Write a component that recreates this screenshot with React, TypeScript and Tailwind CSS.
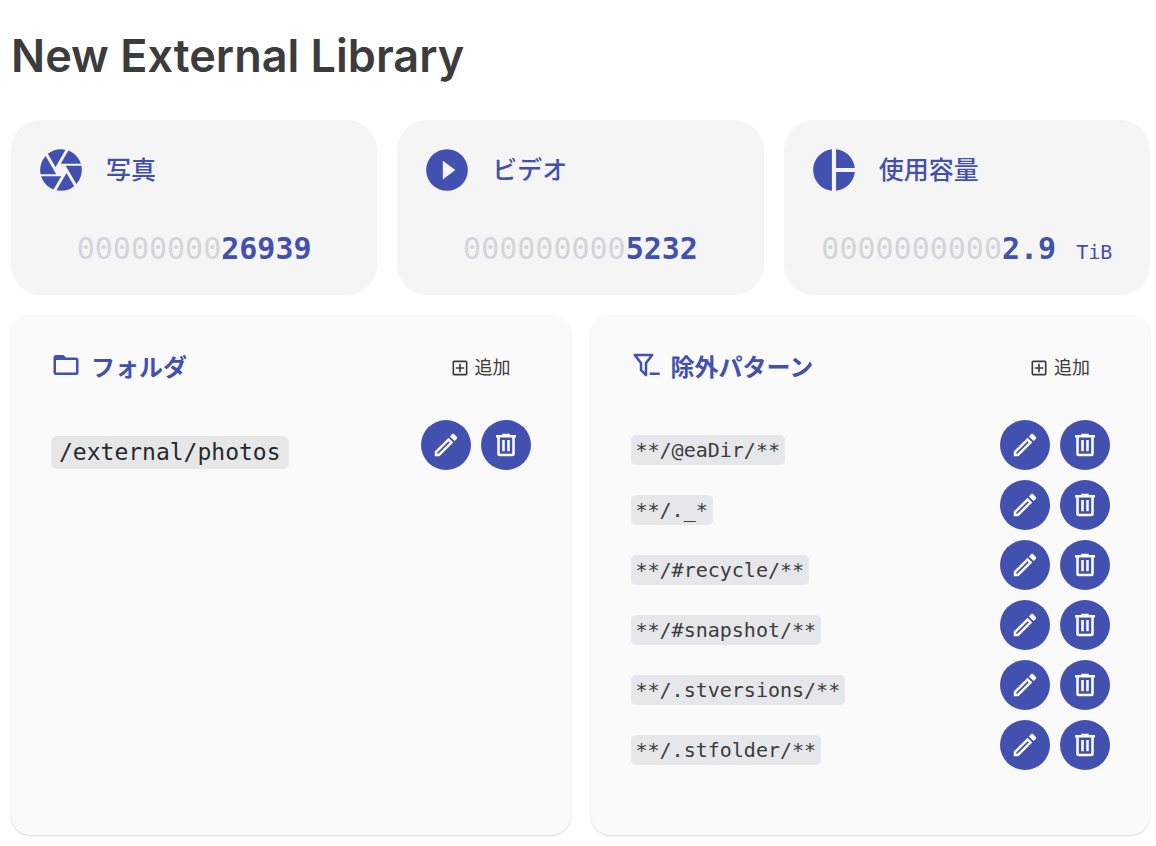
import type { ReactNode } from "react";

// Material Design icon paths, 24x24 view box
const icons = {
  iris: "M13.73,15L9.83,21.76C10.53,21.91 11.25,22 12,22C14.4,22 16.6,21.15 18.32,19.75L14.66,13.4M2.46,15C3.38,17.92 5.61,20.26 8.45,21.34L12.12,15M8.54,12L4.64,5.25C3,7 2,9.39 2,12C2,12.68 2.07,13.35 2.2,14H9.69M21.8,10H14.31L14.6,10.5L19.36,18.75C21,16.97 22,14.6 22,12C22,11.31 21.93,10.64 21.8,10M21.54,9C20.62,6.07 18.39,3.74 15.55,2.66L11.88,9M9.4,10.5L14.17,2.24C13.47,2.09 12.75,2 12,2C9.6,2 7.4,2.84 5.68,4.25L9.34,10.6L9.4,10.5Z",
  play: "M10,16.5V7.5L16,12M12,2A10,10 0 0,0 2,12A10,10 0 0,0 12,22A10,10 0 0,0 22,12A10,10 0 0,0 12,2Z",
  pie: "M11,2V22C5.9,21.5 2,17.2 2,12C2,6.8 5.9,2.5 11,2M13,2V11H22C21.5,6.2 17.8,2.5 13,2M13,13V22C17.7,21.5 21.5,17.8 22,13H13Z",
  folder: "M20,18H4V8H20M20,6H12L10,4H4C2.89,4 2,4.89 2,6V18A2,2 0 0,0 4,20H20A2,2 0 0,0 22,18V8C22,6.89 21.1,6 20,6Z",
  filterMinus:
    "M23,18V20H15V18H23M13,19.88C13.04,20.18 12.94,20.5 12.71,20.71C12.32,21.1 11.69,21.1 11.29,20.71L7.29,16.7C7.06,16.47 6.96,16.16 7,15.87V10.75L2.21,4.62C1.87,4.19 1.95,3.56 2.38,3.22C2.57,3.08 2.78,3 3,3H17C17.22,3 17.43,3.08 17.62,3.22C18.05,3.56 18.13,4.19 17.79,4.62L13,10.75V19.88M5.04,5L9,10.06V15.58L11,17.58V10.05L14.96,5H5.04Z",
  plusBox:
    "M19,19V5H5V19H19M19,3A2,2 0 0,1 21,5V19A2,2 0 0,1 19,21H5A2,2 0 0,1 3,19V5C3,3.89 3.9,3 5,3H19M11,7H13V11H17V13H13V17H11V13H7V11H11V7Z",
  pencil:
    "M14.06,9L15,9.94L5.92,19H5V18.08L14.06,9M17.66,3C17.41,3 17.15,3.1 16.96,3.29L15.13,5.12L18.88,8.87L20.71,7.04C21.1,6.65 21.1,6 20.71,5.63L18.37,3.29C18.17,3.09 17.92,3 17.66,3M14.06,6.19L3,17.25V21H6.75L17.81,9.94L14.06,6.19Z",
  trash:
    "M9,3V4H4V6H5V19A2,2 0 0,0 7,21H17A2,2 0 0,0 19,19V6H20V4H15V3H9M7,6H17V19H7V6M9,8V17H11V8H9M13,8V17H15V8H13Z",
};

type IconName = keyof typeof icons;

const FOLDERS = ["/external/photos"];

const PATTERNS = [
  "**/@eaDir/**",
  "**/._*",
  "**/#recycle/**",
  "**/#snapshot/**",
  "**/.stversions/**",
  "**/.stfolder/**",
];

const STAT_DIGITS = 13;

export default function App() {
  return (
    <main
      lang="ja"
      className="min-h-screen bg-white pt-[26px] pr-[6px] pb-[11px] pl-[11px] font-['Inter','Noto_Sans_CJK_JP',sans-serif] text-[#3c3c3c]"
    >
      <h1 className="mb-[34px] text-[45px] leading-[60px] font-semibold">
        New External Library
      </h1>

      <section className="mb-5 grid grid-cols-3 gap-5">
        <StatCard icon="iris" title="写真" value="26939" />
        <StatCard icon="play" title="ビデオ" value="5232" />
        <StatCard icon="pie" title="使用容量" value="2.9" unit="TiB" />
      </section>

      <section className="grid grid-cols-2 gap-5">
        <Panel icon="folder" title="フォルダ">
          {FOLDERS.map((path) => (
            <Row key={path} name={path}>
              <code className="mt-4 rounded-md bg-[#e7e7e7] px-2 font-['DejaVu_Sans_Mono',monospace] text-[23px] leading-[33px] text-[#1f2a30]">
                {path}
              </code>
            </Row>
          ))}
        </Panel>
        <Panel icon="filterMinus" title="除外パターン">
          {PATTERNS.map((pattern) => (
            <Row key={pattern} name={pattern}>
              <code className="mt-[15px] rounded-[5px] bg-[#e5e7eb] px-[5px] font-['DejaVu_Sans_Mono',monospace] text-[20px] leading-[30px]">
                {pattern}
              </code>
            </Row>
          ))}
        </Panel>
      </section>
    </main>
  );
}

function StatCard({
  icon,
  title,
  value,
  unit,
}: {
  icon: IconName;
  title: string;
  value: string;
  unit?: string;
}) {
  const zeros = "0".repeat(Math.max(0, STAT_DIGITS - value.length));

  return (
    <div className="rounded-[30px] bg-[#f5f5f5] p-[25px] text-[#4250af]">
      <div className="flex items-center gap-5">
        <Icon name={icon} className="size-[50px]" />
        <h2 className="text-[25px] leading-9 font-medium">{title}</h2>
      </div>
      <p className="mt-8 flex items-baseline justify-center font-['DejaVu_Sans_Mono',monospace] text-[30px] leading-[43px]">
        <span className="text-[#d1d5db]">{zeros}</span>
        <span className="font-semibold">{value}</span>
        {unit && <span className="ml-5 text-[20px] leading-none">{unit}</span>}
      </p>
    </div>
  );
}

function Panel({
  icon,
  title,
  children,
}: {
  icon: IconName;
  title: string;
  children: ReactNode;
}) {
  return (
    <div className="min-h-[520px] rounded-[20px] bg-[#fafafa] px-10 pt-[35px] pb-10 shadow-[0_1px_2px_rgba(0,0,0,0.16)]">
      <div className="mb-[34px] flex items-start justify-between">
        <div className="flex items-start gap-[10px] text-[#4250af]">
          <Icon name={icon} className="size-[30px]" />
          <h2 className="text-[24px] leading-9 font-bold">{title}</h2>
        </div>
        <button
          type="button"
          className="flex h-[35px] items-center gap-[5px] rounded-full px-5 text-[18px]"
        >
          <Icon name="plusBox" className="size-5" />
          追加
        </button>
      </div>
      <ul className="flex flex-col gap-[10px]">{children}</ul>
    </div>
  );
}

function Row({ name, children }: { name: string; children: ReactNode }) {
  return (
    <li className="flex items-start justify-between gap-4">
      {children}
      <div className="flex gap-[10px]">
        <RoundButton icon="pencil" label={`${name} を編集`} />
        <RoundButton icon="trash" label={`${name} を削除`} />
      </div>
    </li>
  );
}

function RoundButton({ icon, label }: { icon: IconName; label: string }) {
  return (
    <button
      type="button"
      aria-label={label}
      className="flex size-[50px] items-center justify-center rounded-full bg-[#4250af] text-white hover:bg-[#37449a]"
    >
      <Icon name={icon} className="size-[30px]" />
    </button>
  );
}

function Icon({ name, className }: { name: IconName; className: string }) {
  return (
    <svg
      viewBox="0 0 24 24"
      fill="currentColor"
      aria-hidden="true"
      className={`shrink-0 ${className}`}
    >
      <path d={icons[name]} />
    </svg>
  );
}
